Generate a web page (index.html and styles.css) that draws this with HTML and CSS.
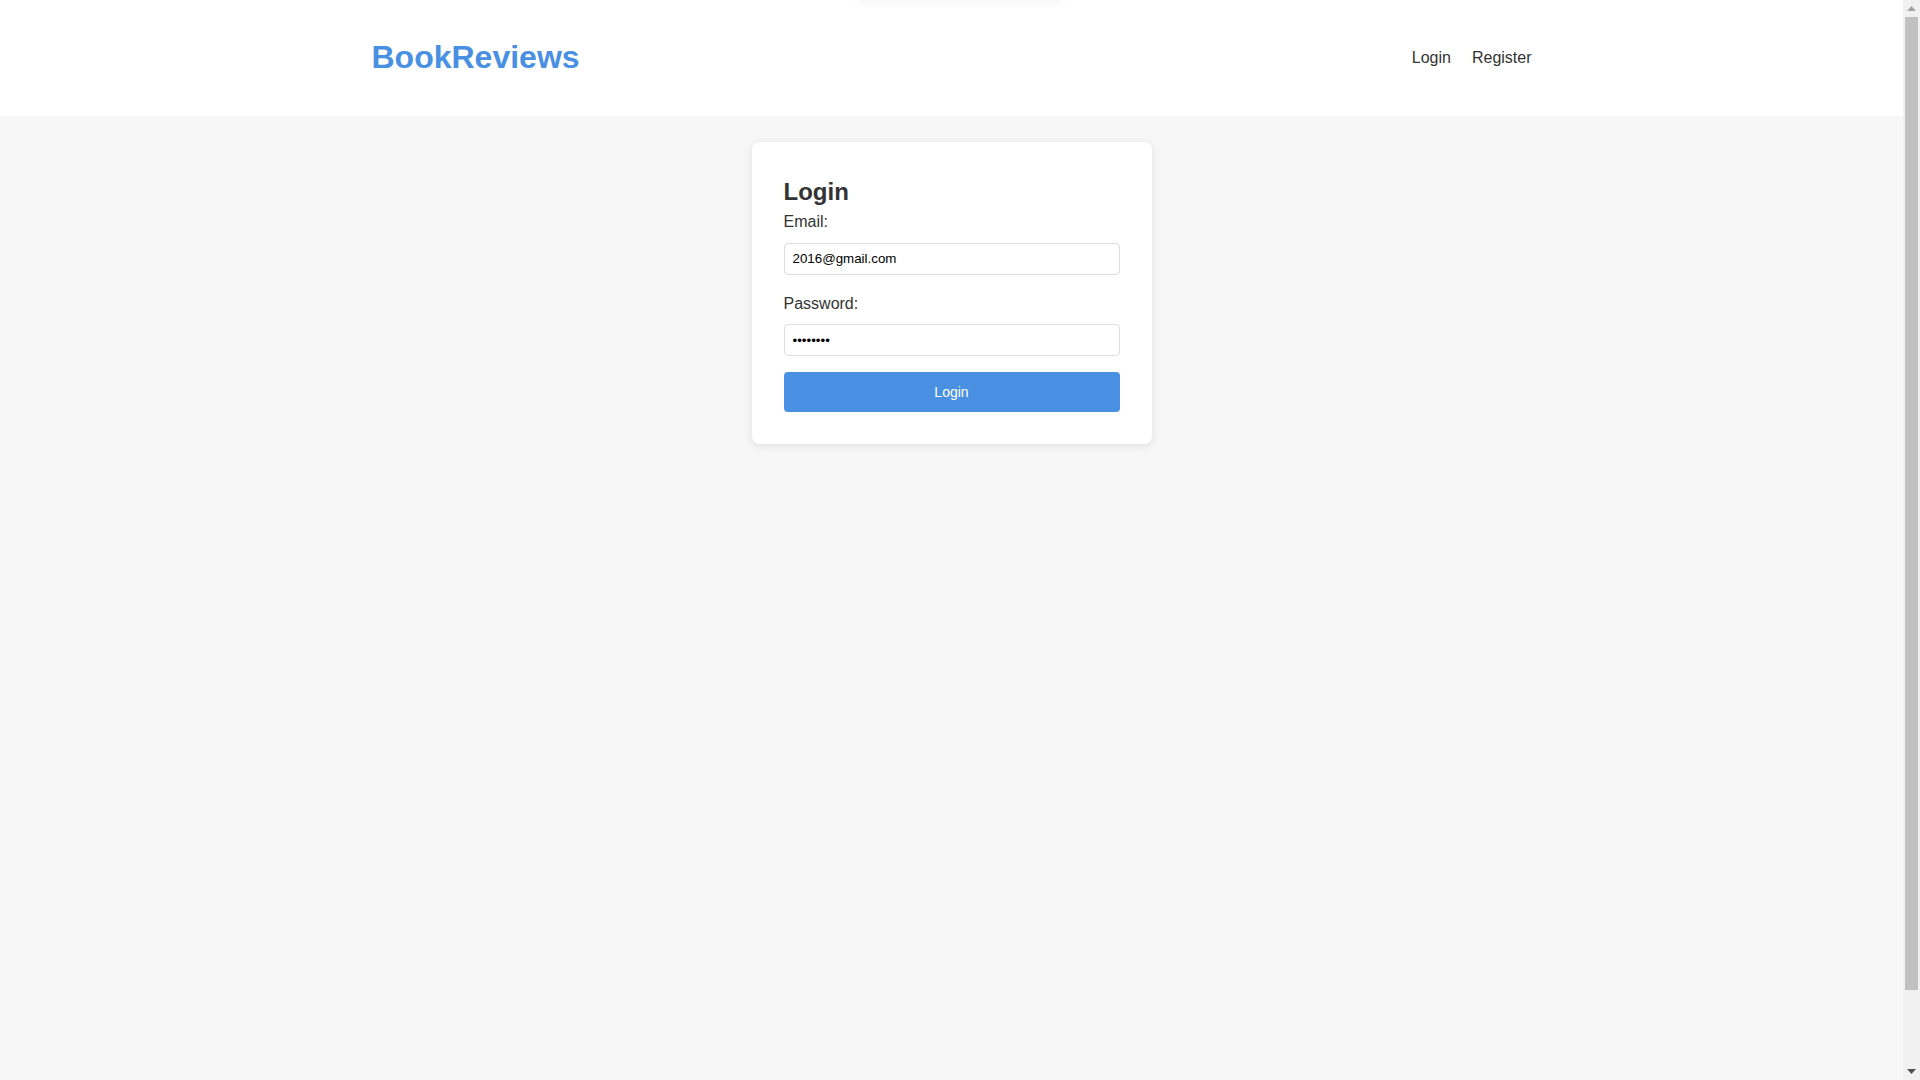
FILE: index.html
```html
<!DOCTYPE html>
<html lang="en">
<head>
<meta charset="utf-8">
<title>BookReviews - Login</title>
<link rel="stylesheet" href="styles.css">
</head>
<body>
<div class="toast-ghost"></div>
<div class="page">
  <header class="site-header">
    <div class="container header-inner">
      <a class="logo" href="#">BookReviews</a>
      <nav class="nav">
        <a href="#">Login</a>
        <a href="#">Register</a>
      </nav>
    </div>
  </header>
  <main class="main">
    <div class="card">
      <h2 class="card-title">Login</h2>
      <form class="form">
        <div class="form-group">
          <label for="email">Email:</label>
          <input id="email" type="email" value="2016@gmail.com">
        </div>
        <div class="form-group">
          <label for="password">Password:</label>
          <input id="password" type="password" value="12345678">
        </div>
        <button type="button" class="btn">Login</button>
      </form>
    </div>
  </main>
</div>
<div class="scrollbar" aria-hidden="true">
  <div class="sb-btn">
    <svg width="9" height="5" viewBox="0 0 9 5"><polygon points="0,5 9,5 4.5,0" fill="#a3a3a3"/></svg>
  </div>
  <div class="sb-track">
    <div class="sb-thumb"></div>
  </div>
  <div class="sb-btn">
    <svg width="9" height="5" viewBox="0 0 9 5"><polygon points="0,0 9,0 4.5,5" fill="#505050"/></svg>
  </div>
</div>
</body>
</html>
```
FILE: styles.css
```css
html {
  background: #f7f7f7;
}
body {
  margin: 0;
  display: flex;
  align-items: flex-start;
  font-family: "Liberation Sans", Arial, sans-serif;
  font-size: 16px;
  line-height: 1.6;
  color: #333;
  background: #f7f7f7;
}
.page {
  flex: 1;
  min-width: 0;
}
.scrollbar {
  position: sticky;
  top: 0;
  width: 17px;
  height: 100vh;
  flex-shrink: 0;
  display: flex;
  flex-direction: column;
  background: #f1f1f1;
}
.sb-btn {
  height: 17px;
  display: flex;
  align-items: center;
  justify-content: center;
}
.sb-btn svg {
  display: block;
}
.sb-track {
  flex: 1;
  padding: 0 2px;
}
.sb-thumb {
  height: 973px;
  background: #c1c1c1;
}
.toast-ghost {
  position: fixed;
  top: -60px;
  left: 50%;
  width: 210px;
  height: 56px;
  margin-left: -105px;
  background: #fff;
  box-shadow: 0 4px 10px rgba(0, 0, 0, 0.06);
  z-index: 10;
}
.site-header {
  background: #fff;
}
.container {
  box-sizing: border-box;
  max-width: 1200px;
  margin: 0 auto;
  padding: 0 20px;
}
.header-inner {
  height: 116px;
  display: flex;
  align-items: center;
  justify-content: space-between;
}
.logo {
  font-size: 32px;
  font-weight: bold;
  color: #4a90e2;
  text-decoration: none;
}
.nav {
  display: flex;
  gap: 21px;
}
.nav a {
  color: #333;
  text-decoration: none;
  font-size: 16px;
}
.main {
  padding-top: 26px;
  min-height: 1019px;
}
.card {
  width: 400px;
  box-sizing: border-box;
  margin: 0 auto;
  background: #fff;
  border-radius: 8px;
  box-shadow: 0 2px 10px rgba(0, 0, 0, 0.1);
  padding: 32px;
}
.card-title {
  font-size: 24px;
  line-height: normal;
  margin: 4px 0 3px;
  color: #333;
}
.form-group {
  margin-bottom: 16px;
}
.form-group label {
  display: block;
  margin-bottom: 8px;
  color: #333;
}
.form-group input {
  display: block;
  width: 100%;
  height: 32px;
  box-sizing: border-box;
  padding: 0 8px;
  border: 1px solid #ddd;
  border-radius: 4px;
  font-family: "Liberation Sans", Arial, sans-serif;
  font-size: 13.33px;
  color: #000;
  background: #fff;
}
.btn {
  display: block;
  width: 100%;
  height: 40px;
  border: 0;
  border-radius: 4px;
  background: #4a90e2;
  color: #fff;
  font-family: "Liberation Sans", Arial, sans-serif;
  font-size: 14px;
  cursor: pointer;
}
```
